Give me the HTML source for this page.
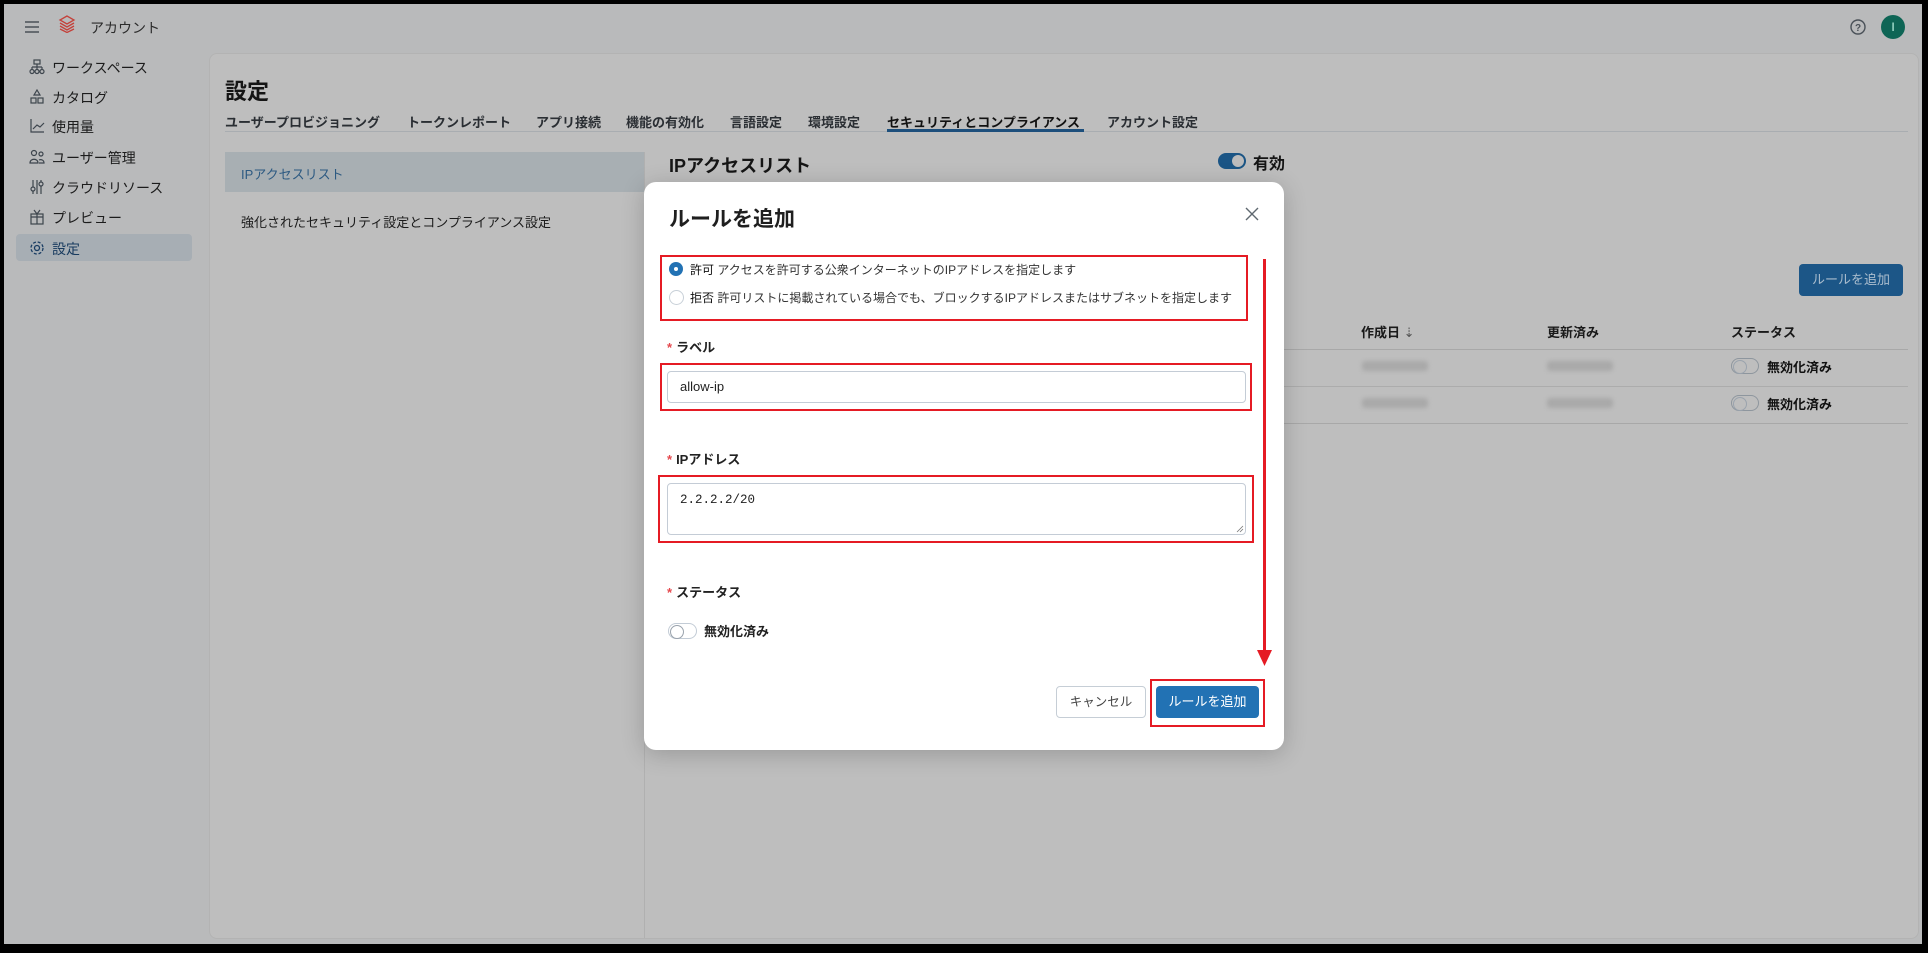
<!DOCTYPE html>
<html><head><meta charset="utf-8"><style>
*{box-sizing:border-box;margin:0;padding:0}
body{width:1928px;height:953px;background:#000;font-family:"Liberation Sans","Noto Sans CJK JP",sans-serif;position:relative;overflow:hidden;color:#111}
.app{position:absolute;left:4px;top:4px;width:1918px;height:940px;background:#b9babb;overflow:hidden}
.abs{position:absolute;white-space:nowrap}
.side{font-size:14px;color:#1c1c1c}
.ic{position:absolute;left:25px}
.panel{position:absolute;left:205px;top:49px;width:1710px;height:886px;background:#bebebe;border-radius:8px;border:1px solid #b3b3b3}
.tab{font-size:13px;font-weight:bold;color:#2a2e33;top:108px}
.modal{position:absolute;left:640px;top:178px;width:640px;height:568px;background:#fff;border-radius:12px;box-shadow:0 4px 24px rgba(0,0,0,.2)}
.red{position:absolute;border:2px solid #e51b24}
.lbl{font-size:13px;font-weight:bold;color:#222}
.lbl b{color:#e5484d;font-weight:bold;margin-right:4px}
.inp{position:absolute;border:1px solid #c4ccd6;border-radius:4px;background:#fff}
.tog{position:absolute;width:28px;height:16px;border:1px solid #9aa3ad;border-radius:9px}
.tog::after{content:"";position:absolute;left:1px;top:1px;width:12px;height:12px;border-radius:50%;border:1px solid #9aa3ad}
.blur{position:absolute;height:10px;background:#a9a9a9;filter:blur(2px);border-radius:3px}
</style></head><body>
<div class="app">
 <svg class="abs" style="left:20px;top:16px" width="16" height="14"><path d="M1 2h14M1 7h14M1 12h14" stroke="#4a5158" stroke-width="1.6"/></svg>
 <svg class="abs" style="left:54px;top:11px" width="18" height="18" viewBox="0 0 18 18" fill="none" stroke="#c4413a" stroke-width="1.3"><path d="M9 1L2 5l7 4 7-4z"/><path d="M2 8l7 4 7-4"/><path d="M2 11l7 4 7-4"/><path d="M2 14l7 3.5 7-3.5"/></svg>
 <div class="abs" style="left:86px;top:14px;font-size:14px;color:#2b2b2b">アカウント</div>
 <svg class="abs" style="left:1845px;top:14px" width="18" height="18"><circle cx="9" cy="9" r="7" stroke="#4a5158" stroke-width="1.4" fill="none"/><text x="9" y="13" font-size="10" font-weight="bold" text-anchor="middle" fill="#4a5158" font-family="Liberation Sans">?</text></svg>
 <div class="abs" style="left:1877px;top:11px;width:24px;height:24px;border-radius:50%;background:#0e6555;color:#cfe;font-size:12px;text-align:center;line-height:24px">I</div>

 <div class="abs" style="left:12px;top:230px;width:176px;height:27px;background:#a7aeb4;border-radius:4px"></div>
 <svg class="ic" style="top:55px" width="16" height="16" fill="none" stroke="#3d454d" stroke-width="1.2"><rect x="5" y="1" width="6" height="4"/><path d="M8 5v3M3 8h10M3 8v2M8 8v2M13 8v2"/><circle cx="3" cy="12.5" r="2"/><circle cx="8" cy="12.5" r="2"/><circle cx="13" cy="12.5" r="2"/></svg>
 <svg class="ic" style="top:85px" width="16" height="16" fill="none" stroke="#3d454d" stroke-width="1.2"><path d="M8 1l3 5H5z"/><rect x="2" y="9" width="5" height="5"/><rect x="9" y="9" width="5" height="5"/></svg>
 <svg class="ic" style="top:114px" width="16" height="16" fill="none" stroke="#3d454d" stroke-width="1.2"><path d="M2 1v13h13M4 11l4-4 3 2 4-4"/></svg>
 <svg class="ic" style="top:145px" width="16" height="16" fill="none" stroke="#3d454d" stroke-width="1.2"><circle cx="5" cy="4" r="2.5"/><circle cx="12" cy="5" r="2"/><path d="M1 14c0-5 8-5 8 0zM10 14h5c0-3-3-4-5-3"/></svg>
 <svg class="ic" style="top:175px" width="16" height="16" fill="none" stroke="#3d454d" stroke-width="1.2"><path d="M4 1v14M12 1v14M8 1v14"/><circle cx="4" cy="10" r="2" fill="#b9babb"/><circle cx="12" cy="5" r="2" fill="#b9babb"/></svg>
 <svg class="ic" style="top:205px" width="16" height="16" fill="none" stroke="#3d454d" stroke-width="1.2"><rect x="2" y="5" width="12" height="10"/><path d="M2 8h12M8 5v10M5 1l3 4 3-4"/></svg>
 <svg class="ic" style="top:236px" width="16" height="16" fill="none" stroke="#1a3d63" stroke-width="1.3"><circle cx="8" cy="8" r="2.5"/><circle cx="8" cy="8" r="6" stroke-dasharray="3 1.8"/></svg>
 <div class="abs side" style="left:48px;top:54px">ワークスペース</div>
 <div class="abs side" style="left:48px;top:84px">カタログ</div>
 <div class="abs side" style="left:48px;top:113px">使用量</div>
 <div class="abs side" style="left:48px;top:144px">ユーザー管理</div>
 <div class="abs side" style="left:48px;top:174px">クラウドリソース</div>
 <div class="abs side" style="left:48px;top:204px">プレビュー</div>
 <div class="abs side" style="left:48px;top:235px;color:#173a5e">設定</div>

 <div class="panel"></div>
 <div class="abs" style="left:221px;top:70px;font-size:22px;font-weight:bold;color:#151515">設定</div>
 <div class="abs tab" style="left:221px">ユーザープロビジョニング</div>
 <div class="abs tab" style="left:403px">トークンレポート</div>
 <div class="abs tab" style="left:532px">アプリ接続</div>
 <div class="abs tab" style="left:622px">機能の有効化</div>
 <div class="abs tab" style="left:726px">言語設定</div>
 <div class="abs tab" style="left:804px">環境設定</div>
 <div class="abs tab" style="left:883px;color:#111">セキュリティとコンプライアンス</div>
 <div class="abs tab" style="left:1103px">アカウント設定</div>
 <div class="abs" style="left:221px;top:127px;width:1683px;height:1px;background:#a9adb1"></div>
 <div class="abs" style="left:883px;top:125px;width:197px;height:3px;background:#1d4f7c"></div>

 <div class="abs" style="left:221px;top:148px;width:419px;height:40px;background:#a8afb3"></div>
 <div class="abs" style="left:237px;top:160px;font-size:13px;color:#2d5a82">IPアクセスリスト</div>
 <div class="abs" style="left:237px;top:208px;font-size:13px;color:#1c1c1c">強化されたセキュリティ設定とコンプライアンス設定</div>
 <div class="abs" style="left:640px;top:148px;width:1px;height:786px;background:#b0b0b0"></div>
 <div class="abs" style="left:665px;top:148px;font-size:18px;font-weight:bold;color:#151515">IPアクセスリスト</div>
 <div class="abs" style="left:1214px;top:149px;width:28px;height:16px;border-radius:8px;background:#1b5585"><div style="position:absolute;right:2px;top:2px;width:12px;height:12px;border-radius:50%;background:#bcbcbc"></div></div>
 <div class="abs" style="left:1249px;top:146px;font-size:16px;font-weight:bold;color:#151515">有効</div>
 <div class="abs" style="left:1795px;top:260px;width:104px;height:32px;background:#1c5687;border-radius:4px;color:#a9bccd;font-size:13px;text-align:center;line-height:32px">ルールを追加</div>
 <div class="abs" style="left:1357px;top:318px;font-size:13px;font-weight:bold;color:#1a1a1a">作成日 <span style="color:#555;font-weight:normal">⇣</span></div>
 <div class="abs" style="left:1543px;top:318px;font-size:13px;font-weight:bold;color:#1a1a1a">更新済み</div>
 <div class="abs" style="left:1727px;top:318px;font-size:13px;font-weight:bold;color:#1a1a1a">ステータス</div>
 <div class="abs" style="left:1270px;top:345px;width:634px;height:1px;background:#a8a8a8"></div>
 <div class="abs" style="left:1270px;top:382px;width:634px;height:1px;background:#acacac"></div>
 <div class="abs" style="left:1270px;top:419px;width:634px;height:1px;background:#a8a8a8"></div>
 <div class="blur" style="left:1358px;top:357px;width:66px"></div>
 <div class="blur" style="left:1543px;top:357px;width:66px"></div>
 <div class="blur" style="left:1358px;top:394px;width:66px"></div>
 <div class="blur" style="left:1543px;top:394px;width:66px"></div>
 <div class="tog" style="left:1727px;top:354px;border-color:#8e969e"></div>
 <div class="abs" style="left:1763px;top:353px;font-size:13px;font-weight:bold">無効化済み</div>
 <div class="tog" style="left:1727px;top:391px;border-color:#8e969e"></div>
 <div class="abs" style="left:1763px;top:390px;font-size:13px;font-weight:bold">無効化済み</div>

 <div class="modal"></div>
 <div class="abs" style="left:665px;top:199px;font-size:21px;font-weight:bold;color:#1f1f1f">ルールを追加</div>
 <svg class="abs" style="left:1241px;top:203px" width="14" height="14"><path d="M1 1l12 12M13 1L1 13" stroke="#5f6870" stroke-width="1.4"/></svg>

 <div class="red" style="left:656px;top:251px;width:588px;height:66px"></div>
 <div class="abs" style="left:665px;top:258px;width:14px;height:14px;border-radius:50%;background:#2272b4"><div style="position:absolute;left:5px;top:5px;width:4px;height:4px;border-radius:50%;background:#fff"></div></div>
 <div class="abs" style="left:686px;top:257px;font-size:12px;color:#333"><span style="color:#111">許可</span> アクセスを許可する公衆インターネットのIPアドレスを指定します</div>
 <div class="abs" style="left:665px;top:286px;width:15px;height:15px;border-radius:50%;border:1px solid #c8d0d8"></div>
 <div class="abs" style="left:686px;top:285px;font-size:12px;color:#333"><span style="color:#111">拒否</span> 許可リストに掲載されている場合でも、ブロックするIPアドレスまたはサブネットを指定します</div>

 <div class="abs lbl" style="left:663px;top:333px"><b>*</b>ラベル</div>
 <div class="red" style="left:656px;top:359px;width:592px;height:48px"></div>
 <div class="inp" style="left:663px;top:367px;width:579px;height:32px"></div>
 <div class="abs" style="left:676px;top:375px;font-size:13px;color:#222">allow-ip</div>

 <div class="abs lbl" style="left:663px;top:445px"><b>*</b>IPアドレス</div>
 <div class="red" style="left:654px;top:471px;width:596px;height:68px"></div>
 <div class="inp" style="left:663px;top:479px;width:579px;height:52px"></div>
 <div class="abs" style="left:676px;top:489px;font-size:12.5px;color:#222;font-family:'Liberation Mono',monospace">2.2.2.2/20</div>
 <svg class="abs" style="left:1232px;top:521px" width="8" height="8"><path d="M1 7L7 1M4 7L7 4" stroke="#777" stroke-width="0.8"/></svg>

 <div class="abs lbl" style="left:663px;top:578px"><b>*</b>ステータス</div>
 <div class="tog" style="left:664px;top:619px;border-color:#c3ccd6;width:29px"></div>
 <div class="abs" style="left:700px;top:617px;font-size:13px;font-weight:bold;color:#222">無効化済み</div>

 <div class="abs" style="left:1259px;top:255px;width:3px;height:395px;background:#e51b24"></div>
 <svg class="abs" style="left:1253px;top:646px" width="15" height="16"><path d="M0 0h15L7.5 16z" fill="#e51b24"/></svg>

 <div class="abs" style="left:1052px;top:682px;width:90px;height:32px;border:1px solid #c6ced6;border-radius:4px;font-size:12.5px;color:#444;text-align:center;line-height:30px">キャンセル</div>
 <div class="red" style="left:1146px;top:675px;width:115px;height:48px"></div>
 <div class="abs" style="left:1152px;top:682px;width:103px;height:32px;background:#2272b4;border-radius:4px;font-size:13px;color:#fff;text-align:center;line-height:32px">ルールを追加</div>
</div>
</body></html>
